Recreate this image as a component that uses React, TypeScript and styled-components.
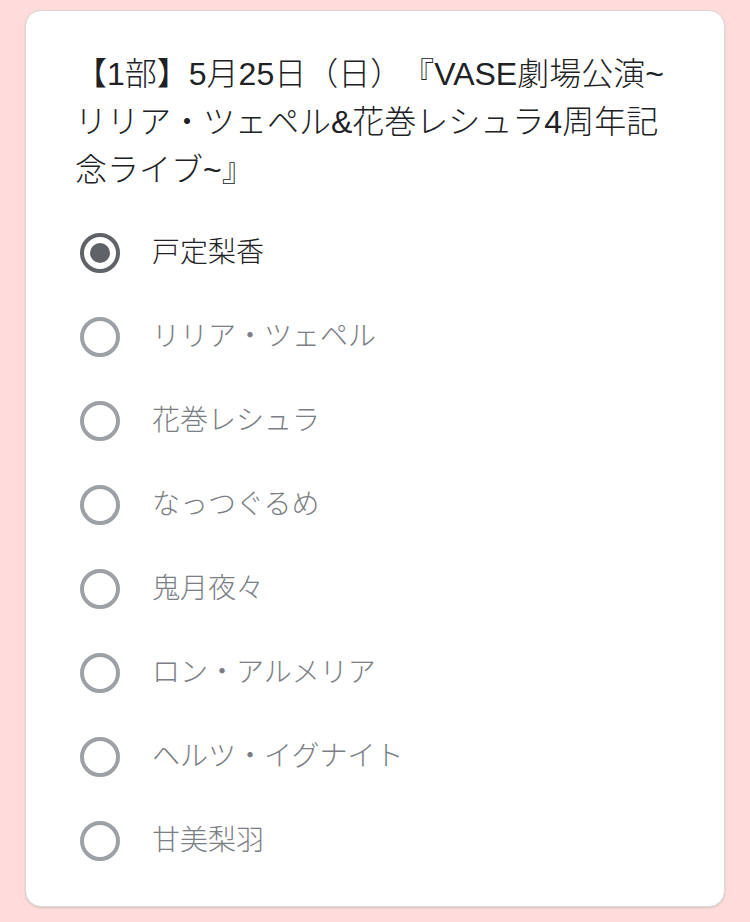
import styled, { createGlobalStyle } from "styled-components";

const members = [
  "戸定梨香",
  "リリア・ツェペル",
  "花巻レシュラ",
  "なっつぐるめ",
  "鬼月夜々",
  "ロン・アルメリア",
  "ヘルツ・イグナイト",
  "甘美梨羽",
];

function App() {
  const selected = 0;

  return (
    <Page>
      <GlobalStyle />
      <Card>
        <Title>
          【1部】5月25日（日）『VASE劇場公演~リリア・ツェペル&花巻レシュラ4周年記念ライブ~』
        </Title>

        <Options>
          {members.map((name, i) => (
            <Option key={name}>
              <Radio checked={i === selected} />
              <Label checked={i === selected}>{name}</Label>
            </Option>
          ))}
        </Options>
      </Card>
    </Page>
  );
}

export default App;

const GlobalStyle = createGlobalStyle`
  html, body {
    margin: 0;
    padding: 0;
    background-color: #fddcdb;
  }

  body {
    font-family: "Liberation Sans", "Noto Sans CJK JP", sans-serif;
    text-spacing-trim: space-all;
  }
`;

const Page = styled.main`
  min-height: 922px;
  padding: 10px 25px 0;
  box-sizing: border-box;
  background-color: #fddcdb;
`;

const Card = styled.section`
  width: 700px;
  box-sizing: border-box;
  padding: 39px 49px 23px;
  background-color: #fff;
  border: 1px solid #dcd8d8;
  border-radius: 16px;
  box-shadow: 0 1px 2px rgba(60, 64, 67, 0.18);
`;

const Title = styled.h2`
  margin: 0;
  font-size: 32px;
  font-weight: 300;
  line-height: 48px;
  color: #202124;
  text-spacing-trim: space-all;
`;

const Options = styled.ul`
  list-style: none;
  margin: 17px 0 0;
  padding: 0 0 0 5px;
`;

const Option = styled.li`
  display: flex;
  align-items: center;
  height: 84px;
`;

const Radio = styled.span<{ checked: boolean }>`
  position: relative;
  flex: none;
  width: 40px;
  height: 40px;
  box-sizing: border-box;
  border-radius: 50%;
  border: 4px solid ${(props) => (props.checked ? "#5f6368" : "#9da0a5")};

  &::after {
    content: "";
    display: ${(props) => (props.checked ? "block" : "none")};
    position: absolute;
    top: 6px;
    left: 6px;
    width: 20px;
    height: 20px;
    border-radius: 50%;
    background-color: #5f6368;
  }
`;

const Label = styled.span<{ checked: boolean }>`
  margin-left: 32px;
  font-size: 28px;
  font-weight: 300;
  line-height: 40px;
  color: ${(props) => (props.checked ? "#202124" : "#7b7e83")};
`;
